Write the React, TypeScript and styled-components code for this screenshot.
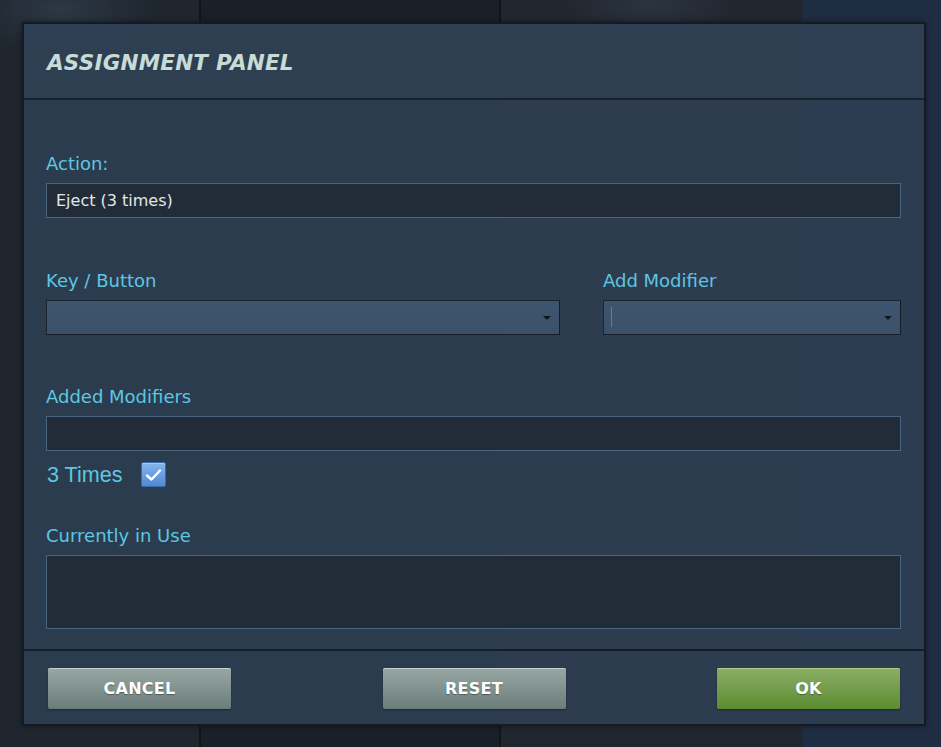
import React from "react";
import styled, { createGlobalStyle } from "styled-components";

const Global = createGlobalStyle`
  html, body { margin: 0; padding: 0; }
  body {
    width: 941px;
    height: 747px;
    overflow: hidden;
    font-family: "DejaVu Sans", sans-serif;
    background:
      radial-gradient(ellipse 130px 60px at 60px 10px, rgba(70, 90, 115, 0.35), transparent 70%),
      radial-gradient(ellipse 120px 40px at 650px 5px, rgba(70, 90, 115, 0.25), transparent 70%),
      linear-gradient(90deg,
        #1f262e 0px, #1f262e 199px,
        #12161c 199px, #12161c 201px,
        #1b2028 201px, #1b2028 499px,
        #12161c 499px, #12161c 501px,
        #22272f 501px, #22272f 802px,
        #1f2d42 803px, #1f2d42 941px);
  }
`;

const Stage = styled.div`
  padding: 22px 15px 21px 22px;
`;

const Panel = styled.section`
  width: 900px;
  height: 700px;
  border: 2px solid #141a22;
  background: rgba(46, 62, 82, 0.94);
  display: flex;
  flex-direction: column;
  box-shadow: 0 0 6px rgba(0, 0, 0, 0.4);
`;

const Header = styled.header`
  height: 74px;
  border-bottom: 2px solid #18202b;
  background: rgba(50, 66, 86, 0.5);
  display: flex;
  align-items: center;
  padding: 0 23px;
`;

const Title = styled.h1`
  margin: 0;
  padding-top: 3px;
  font-family: "DejaVu Sans", sans-serif;
  font-style: italic;
  font-weight: 700;
  font-size: 21.5px;
  letter-spacing: 0.2px;
  color: #c7dbd7;
`;

const Body = styled.div`
  flex: 1;
  padding: 53px 23px 18px 22px;
  display: flex;
  flex-direction: column;
`;

const Label = styled.div`
  font-family: "DejaVu Sans", sans-serif;
  font-size: 18px;
  line-height: 22px;
  color: #5cc7e0;
  margin-bottom: 8px;
`;

const Field = styled.div<{ $h?: number }>`
  height: ${(p) => p.$h ?? 33}px;
  background: #222b38;
  border: 1px solid #4a6480;
  display: flex;
  align-items: center;
  padding: 0 9px;
  font-family: "DejaVu Sans", sans-serif;
  font-size: 16px;
  color: #e4e6e6;
`;

const Group = styled.div<{ $mt?: number }>`
  margin-top: ${(p) => p.$mt ?? 0}px;
  display: flex;
  flex-direction: column;
`;

const SelectRow = styled.div`
  margin-top: 52px;
  display: grid;
  grid-template-columns: 514px 1fr;
  column-gap: 43px;
`;

const Select = styled.div`
  position: relative;
  height: 33px;
  background: linear-gradient(#3f556f, #3b5069);
  border: 1px solid #1c2430;
  border-right-color: #161d27;
  border-bottom-color: #161d27;
`;

const Arrow = styled.span`
  position: absolute;
  right: 8px;
  top: 15px;
  width: 0;
  height: 0;
  border-left: 4px solid transparent;
  border-right: 4px solid transparent;
  border-top: 4px solid #10151c;
`;

const Caret = styled.span`
  position: absolute;
  left: 7px;
  top: 6px;
  width: 1px;
  height: 20px;
  background: rgba(150, 175, 200, 0.45);
`;

const CheckRow = styled.label`
  margin-top: 11px;
  height: 25px;
  display: flex;
  align-items: center;
  gap: 18px;
  font-family: "Liberation Sans", Arial, sans-serif;
  font-size: 21.6px;
  color: #5cc7e0;
  padding-left: 1px;
`;

const Box = styled.span`
  width: 23px;
  height: 23px;
  border: 1px solid #3f6ca8;
  border-radius: 2px;
  background: linear-gradient(#86b5ee, #5089d6);
  display: flex;
  align-items: center;
  justify-content: center;
  box-shadow: inset 0 1px 0 rgba(255, 255, 255, 0.25);
`;

const Footer = styled.footer`
  border-top: 2px solid #161d27;
  height: 75px;
  padding: 17px 24px 0 24px;
  box-sizing: border-box;
  display: flex;
  justify-content: space-between;
  align-items: flex-start;
`;

const Button = styled.button<{ $variant?: "gray" | "green" }>`
  width: 183px;
  height: 41px;
  border: none;
  border-radius: 2px;
  padding: 0;
  cursor: pointer;
  font-family: "DejaVu Sans", sans-serif;
  font-weight: 700;
  font-size: 16px;
  letter-spacing: 0.3px;
  color: #ffffff;
  text-shadow: 0 1px 1px rgba(0, 0, 0, 0.35);
  background: ${(p) =>
    p.$variant === "green"
      ? "linear-gradient(#8cae66, #5c8c31)"
      : "linear-gradient(#97a7a4, #6b7d7b)"};
  box-shadow: inset 0 1px 0
      ${(p) => (p.$variant === "green" ? "rgba(190,220,150,0.7)" : "rgba(215,225,222,0.7)")},
    0 1px 2px rgba(0, 0, 0, 0.35);
`;

export default function App() {
  return (
    <>
      <Global />
      <Stage>
        <Panel>
          <Header>
            <Title>ASSIGNMENT PANEL</Title>
          </Header>
          <Body>
            <Group>
              <Label>Action:</Label>
              <Field>Eject (3 times)</Field>
            </Group>
            <SelectRow>
              <Group>
                <Label>Key / Button</Label>
                <Select>
                  <Arrow />
                </Select>
              </Group>
              <Group>
                <Label>Add Modifier</Label>
                <Select>
                  <Caret />
                  <Arrow />
                </Select>
              </Group>
            </SelectRow>
            <Group $mt={51}>
              <Label>Added Modifiers</Label>
              <Field />
            </Group>
            <CheckRow>
              3 Times
              <Box>
                <svg width="17" height="14" viewBox="0 0 17 14">
                  <path
                    d="M2 7.5 L6.5 11.5 L15 2.5"
                    fill="none"
                    stroke="#ffffff"
                    strokeWidth="2.4"
                    strokeLinecap="round"
                    strokeLinejoin="round"
                  />
                </svg>
              </Box>
            </CheckRow>
            <Group $mt={38}>
              <Label>Currently in Use</Label>
              <Field $h={72} />
            </Group>
          </Body>
          <Footer>
            <Button $variant="gray">CANCEL</Button>
            <Button $variant="gray">RESET</Button>
            <Button $variant="green">OK</Button>
          </Footer>
        </Panel>
      </Stage>
    </>
  );
}
